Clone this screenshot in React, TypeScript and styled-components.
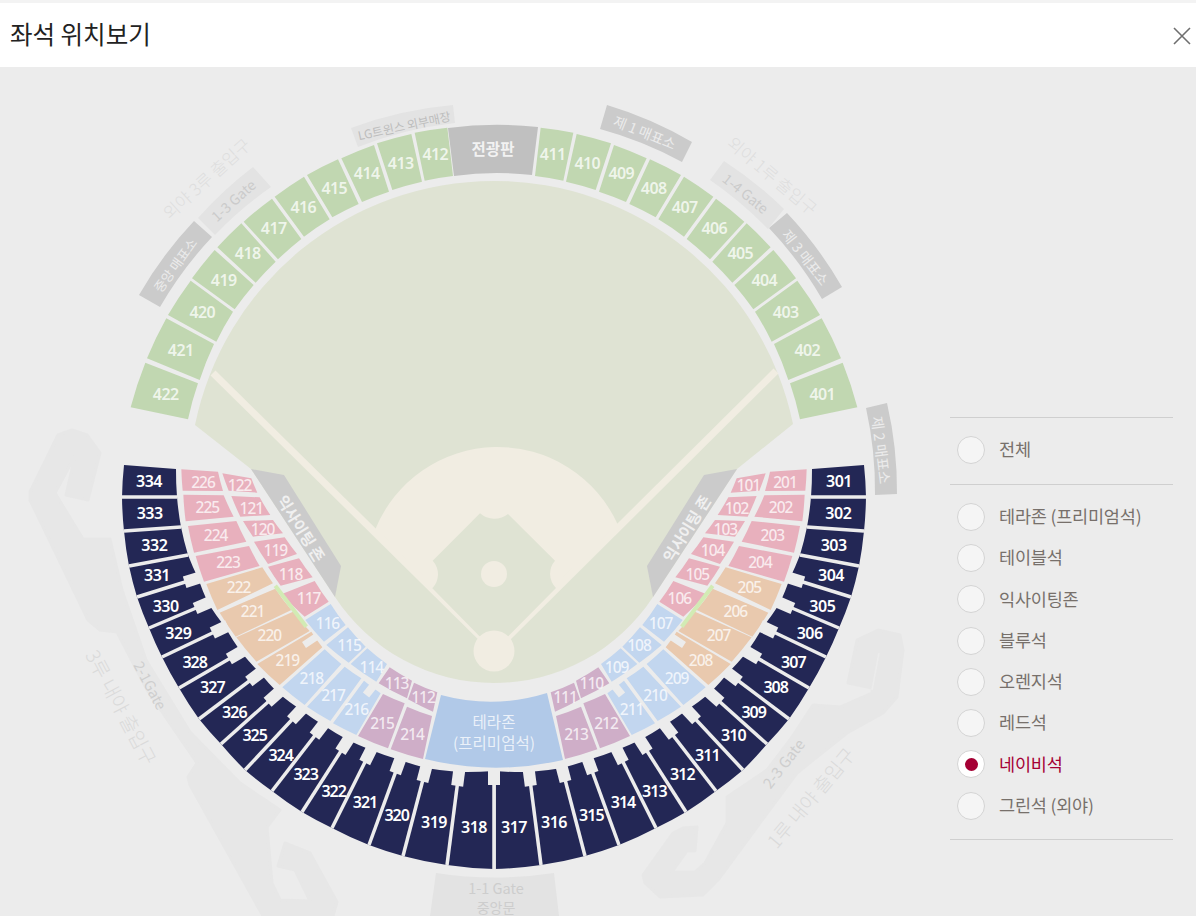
import React from 'react';
import styled, { createGlobalStyle } from 'styled-components';

type Pt = [number, number];
type Tone = 'navy' | 'pink' | 'orange' | 'blue' | 'mauve' | 'green';

const AXIS = 988;

const GlobalStyle = createGlobalStyle`
  html, body { margin: 0; padding: 0; background: #ececec; }
  * { box-sizing: border-box; }
`;

const Page = styled.div`
  width: 1196px;
  height: 916px;
  overflow: hidden;
  background: #ececec;
  font-family: 'Noto Sans CJK KR', 'Noto Sans', sans-serif;
`;
const TopStrip = styled.div`
  height: 3px;
  background: #f3f3f3;
`;
const Header = styled.header`
  height: 64px;
  background: #fff;
  display: flex;
  align-items: center;
  justify-content: space-between;
  padding: 0 5px 0 10px;
`;
const Title = styled.h1`
  margin: 0;
  font-size: 24.5px;
  line-height: 1;
  font-weight: 400;
  color: #222;
  position: relative;
  top: -1px;
`;
const CloseButton = styled.button`
  width: 18px;
  height: 18px;
  padding: 0;
  border: 0;
  background: none;
  display: flex;
  position: relative;
  top: 1px;
`;
const Body = styled.main`
  display: flex;
  height: 849px;
`;
const MapSvg = styled.svg`
  display: block;
  flex: none;
  width: 950px;
  height: 849px;
`;
const Legend = styled.aside`
  width: 223px;
  padding-top: 350px;
  flex: none;
`;
const LegendGroup = styled.div`
  border-top: 1px solid #cfcfcf;
  padding: 11.5px 0 13px;
  &:last-child {
    border-bottom: 1px solid #cfcfcf;
  }
`;
const LegendRow = styled.label`
  height: 41.25px;
  display: flex;
  align-items: center;
  gap: 14px;
  padding-left: 7px;
`;
const Radio = styled.span<{ $on?: boolean }>`
  width: 28px;
  height: 28px;
  border-radius: 50%;
  border: 1px solid #d4d4d4;
  background: ${(p) => (p.$on ? '#fff' : '#f5f5f5')};
  display: flex;
  align-items: center;
  justify-content: center;
  &::after {
    content: '';
    display: ${(p) => (p.$on ? 'block' : 'none')};
    width: 13px;
    height: 13px;
    border-radius: 50%;
    background: #a50034;
  }
`;
const LegendText = styled.span<{ $on?: boolean }>`
  font-size: 17.5px;
  line-height: 1;
  letter-spacing: -0.2px;
  padding-bottom: 2px;
  color: ${(p) => (p.$on ? '#a50034' : '#77706b')};
`;

const fills: Record<Tone, string> = {
  navy: '#232755',
  pink: '#e8b0bd',
  orange: '#e9c9ae',
  blue: '#c2d6ef',
  mauve: '#cfaec8',
  green: '#c1d7b1',
};

const Section = styled.path<{ $tone: Tone }>`
  fill: ${(p) => fills[p.$tone]};
`;
const Terrace = styled.path`
  fill: #b1c9e8;
`;
const Walkway = styled.path`
  fill: #e7e7e7;
  stroke: #e7e7e7;
  stroke-width: 3;
  stroke-linejoin: round;
`;
const Outfield = styled.path`
  fill: #dfe3d3;
`;
const Dirt = styled.path`
  fill: #f1ede2;
`;
const BaseSpot = styled.circle`
  fill: #f1ede2;
`;
const FoulLine = styled.line`
  stroke: #f1ede2;
  stroke-width: 7;
`;
const Divider = styled.line`
  stroke: #ececec;
  stroke-width: 3.5;
`;
const Notch = styled.line`
  stroke: #ececec;
  stroke-width: 12;
`;
const Slit = styled.line`
  stroke: #ececec;
  stroke-width: 1.5;
`;
const Seam = styled.line`
  stroke: #d2ebb4;
  stroke-width: 4;
`;
const Plate = styled.path<{ $kind: 'ticket' | 'gate' | 'board' }>`
  fill: ${(p) => (p.$kind === 'ticket' ? '#cbcbcb' : p.$kind === 'board' ? '#c0c0c0' : '#e3e3e3')};
`;
const SeatLabel = styled.text<{ $navy?: boolean; $size?: number; $tight?: number; $weight?: number }>`
  font-family: 'Noto Sans', 'Noto Sans CJK KR', sans-serif;
  font-size: ${(p) => p.$size ?? 15.5}px;
  font-weight: ${(p) => p.$weight ?? 500};
  letter-spacing: ${(p) => p.$tight ?? -1}px;
  fill: ${(p) => (p.$navy ? '#fff' : 'rgba(255,255,255,0.75)')};
  text-anchor: middle;
  dominant-baseline: central;
`;
const MapNote = styled.text<{ $size: number; $color: string; $weight?: number }>`
  font-family: 'Noto Sans CJK KR', 'Noto Sans', sans-serif;
  font-size: ${(p) => p.$size}px;
  font-weight: ${(p) => p.$weight ?? 400};
  fill: ${(p) => p.$color};
  text-anchor: middle;
  dominant-baseline: central;
`;

// Crop coordinates (3x) of the right lower bowl and of the right upper deck, read off the picture.
const bowl = (X: number, Y: number): Pt => [520 + X / 3, 440 + Y / 3];
const deck = (X: number, Y: number): Pt => [500 + X / 3, 90 + Y / 3];

const navyDividers: { outer: Pt; inner: Pt; notch?: boolean }[] = [
  { outer: [864, 465], inner: [812, 469] },
  { outer: [866, 497], inner: [811, 497] },
  { outer: [864, 531], inner: [807, 527] },
  { outer: [859, 566], inner: [800, 555] },
  { outer: [851, 597], inner: [790, 578], notch: true },
  { outer: [839, 628], inner: [780, 603], notch: true },
  { outer: [826, 657], inner: [763, 627], notch: true },
  { outer: [809, 688], inner: [747, 652], notch: true },
  { outer: [789, 719], inner: [728, 673], notch: true },
  { outer: [767, 744], inner: [710, 693], notch: true },
  { outer: [743, 770], inner: [687, 710], notch: true },
  { outer: [716, 791], inner: [665, 725], notch: true },
  { outer: [686, 812], inner: [640, 740], notch: true },
  { outer: [656, 828], inner: [617, 750], notch: true },
  { outer: [619, 845], inner: [588, 760], notch: true },
  { outer: [585, 856], inner: [562, 768], notch: true },
  { outer: [541, 865], inner: [529, 772], notch: true },
  { outer: [494, 869], inner: [494, 771], notch: true },
];

const ring = (tone: Tone, R: number, r: number, quad: number[][]) =>
  quad.map((q) => {
    // listed as inner-top, outer-top, outer-bottom, inner-bottom
    const [a, b, c, d] = [bowl(q[0], q[1]), bowl(q[2], q[3]), bowl(q[4], q[5]), bowl(q[6], q[7])];
    return { tone, d: arcQuad(b, c, d, a, R, r) };
  });

function arcQuad(oa: Pt, ob: Pt, ib: Pt, ia: Pt, R: number, r: number) {
  return `M${oa} A${R} ${R} 0 0 1 ${ob} L${ib} A${r} ${r} 0 0 0 ${ia} Z`;
}

const seats: { tone: Tone; d: string }[] = [
  ...navyDividers.slice(0, -1).map((v, i) => {
    const n = navyDividers[i + 1];
    return { tone: 'navy' as Tone, d: arcQuad(v.outer, n.outer, n.inner, v.inner, 371, 320) };
  }),
  ...ring('pink', 310, 250, [
    [750, 95, 860, 88, 856, 152, 735, 153],
    [733, 166, 854, 164, 847, 244, 703, 230],
    [695, 243, 840, 258, 822, 338, 665, 305],
    [657, 318, 817, 348, 792, 425, 625, 378],
  ]),
  ...ring('orange', 310, 250, [
    [617, 382, 785, 432, 752, 510, 585, 430],
    [578, 446, 745, 518, 697, 590, 530, 510],
    [525, 515, 695, 592, 635, 665, 475, 573],
    [470, 575, 632, 672, 565, 735, 437, 622],
  ]),
  ...ring('blue', 310, 250, [
    [430, 628, 557, 742, 490, 795, 380, 672],
    [370, 680, 483, 800, 413, 843, 320, 715],
    [312, 722, 405, 850, 335, 885, 262, 760],
  ]),
  ...ring('mauve', 310, 250, [
    [255, 762, 330, 888, 240, 925, 190, 790],
    [183, 800, 232, 928, 135, 957, 108, 828],
  ]),
  ...ring('pink', 250, 200, [
    [650, 115, 737, 100, 718, 152, 632, 158],
    [625, 172, 710, 168, 683, 230, 593, 225],
    [585, 240, 675, 243, 645, 290, 555, 280],
    [550, 292, 642, 305, 600, 372, 513, 342],
    [507, 355, 600, 380, 562, 437, 466, 412],
    [460, 423, 558, 462, 490, 530, 418, 485],
  ]),
  ...ring('blue', 250, 200, [
    [412, 492, 488, 540, 432, 605, 367, 555],
    [360, 562, 425, 615, 358, 668, 307, 620],
    [302, 625, 352, 672, 275, 725, 243, 672],
  ]),
  ...ring('mauve', 250, 200, [
    [235, 682, 268, 730, 183, 775, 168, 722],
    [162, 728, 180, 778, 105, 815, 92, 757],
  ]),
  ...[
    [122, 113, 220, 128, 190, 272, 105, 258],
    [230, 132, 333, 160, 287, 300, 198, 275],
    [342, 165, 440, 205, 378, 336, 297, 305],
    [450, 208, 543, 255, 467, 382, 388, 342],
    [552, 260, 640, 320, 552, 440, 475, 388],
    [648, 326, 733, 395, 630, 508, 560, 447],
    [740, 400, 812, 472, 697, 578, 637, 515],
    [820, 480, 888, 565, 760, 658, 703, 585],
    [892, 572, 960, 675, 815, 755, 765, 665],
    [965, 685, 1023, 805, 865, 870, 822, 762],
    [1028, 818, 1072, 952, 900, 988, 870, 880],
  ].map((q) => ({
    tone: 'green' as Tone,
    d: arcQuad(deck(q[0], q[1]), deck(q[2], q[3]), deck(q[4], q[5]), deck(q[6], q[7]), 375, 314),
  })),
];

const notchEnd = (v: { outer: Pt; inner: Pt }, from: number, to: number) => {
  const dx = v.outer[0] - v.inner[0];
  const dy = v.outer[1] - v.inner[1];
  const len = Math.hypot(dx, dy);
  const at = (t: number): Pt => [v.inner[0] + (dx / len) * t, v.inner[1] + (dy / len) * t];
  return { a: at(from), b: at(to) };
};

const navyLabels: [number, number, number][] = [
  [301, 957, 122], [302, 955, 220], [303, 941, 315], [304, 933, 405], [305, 907, 497], [306, 869, 580],
  [307, 820, 665], [308, 767, 742], [309, 701, 816], [310, 640, 886], [311, 562, 946], [312, 487, 1003],
  [313, 403, 1053], [314, 309, 1087], [315, 214, 1125], [316, 102, 1146], [317, -18, 1161],
];
const lowerLabels: [number, number, number][] = [
  [201, 795, 127], [202, 782, 202], [203, 757, 286], [204, 720, 366], [205, 688, 440], [206, 646, 514],
  [207, 596, 586], [208, 542, 660], [209, 470, 714], [210, 405, 765], [211, 335, 808], [212, 258, 849],
  [213, 168, 882], [101, 685, 134], [102, 650, 204], [103, 616, 266], [104, 578, 331], [105, 532, 401],
  [106, 478, 475], [107, 422, 549], [108, 357, 615], [109, 290, 680], [110, 214, 730], [111, 135, 772],
];
const deckLabels: [number, number, number][] = [
  [401, 967, 911], [402, 922, 781], [403, 857, 667], [404, 793, 569], [405, 721, 490], [406, 643, 415],
  [407, 554, 350], [408, 461, 295], [409, 364, 250], [410, 262, 218], [411, 158, 193],
];

// Mirrored number across the stadium axis.
const mirrorNavy = (n: number) => 635 - n;
const mirrorLower = (n: number) => (n >= 200 ? 427 - n : 223 - n);
const mirrorDeck = (n: number) => 823 - n;

const plates: { kind: 'ticket' | 'gate' | 'board'; d: string }[] = [
  { kind: 'board', d: 'M448,128 A375 375 0 0 1 538,127 L532,175 A314 314 0 0 0 454,176 Z' },
  { kind: 'ticket', d: 'M607,105 A390 390 0 0 1 692,142 L682,162 A380 380 0 0 0 600,129 Z' },
  { kind: 'ticket', d: 'M787,213 A390 390 0 0 1 842,287 L822,299 A380 380 0 0 0 769,228 Z' },
  { kind: 'ticket', d: 'M887,403 A390 390 0 0 1 897,494 L875,495 A380 380 0 0 0 866,408 Z' },
  { kind: 'ticket', d: 'M139,295 A390 390 0 0 1 194,221 L212,237 A380 380 0 0 0 160,307 Z' },
  { kind: 'gate', d: 'M724,161 A390 390 0 0 1 784,209 L768,229 A380 380 0 0 0 710,180 Z' },
  { kind: 'gate', d: 'M198,218 A390 390 0 0 1 253,167 L271,187 A380 380 0 0 0 215,235 Z' },
  { kind: 'gate', d: 'M351,128 A390 390 0 0 1 453,105 L455,123 A380 380 0 0 0 358,147 Z' },
  { kind: 'gate', d: 'M436,873 A385 385 0 0 0 554,873 L559,916 L430,916 Z' },
];

const notes: { t: string; x: number; y: number; r: number; s: number; c: string; w?: number }[] = [
  { t: '전광판', x: 493, y: 148, r: 0, s: 15.5, c: '#f2f2f2', w: 700 },
  { t: '제 1 매표소', x: 645, y: 132, r: 22, s: 14, c: '#ececec' },
  { t: '제 3 매표소', x: 806, y: 257, r: 52, s: 14, c: '#ececec' },
  { t: '제 2 매표소', x: 882, y: 450, r: 83, s: 14.5, c: '#ececec' },
  { t: '중앙 매표소', x: 175, y: 265, r: -54, s: 13, c: '#ececec' },
  { t: 'LG트윈스 외부매장', x: 404, y: 125, r: -12, s: 12, c: '#bdbdbd' },
  { t: '1-4 Gate', x: 746, y: 193, r: 39, s: 14, c: '#cbcbcb' },
  { t: '1-3 Gate', x: 233, y: 200, r: -42, s: 14, c: '#cbcbcb' },
  { t: '외야 1루 출입구', x: 773, y: 175, r: 40, s: 17, c: '#dedede', w: 300 },
  { t: '외야 3루 출입구', x: 206, y: 178, r: -42, s: 17, c: '#dedede', w: 300 },
  { t: '익사이팅 존', x: 686, y: 528, r: -58, s: 15.5, c: '#f0f0f0', w: 700 },
  { t: '익사이팅 존', x: 302, y: 528, r: 58, s: 15.5, c: '#f0f0f0', w: 700 },
  { t: '3루 내야 출입구', x: 122, y: 707, r: 62, s: 19.5, c: '#dadada', w: 300 },
  { t: '2-1Gate', x: 151, y: 685, r: 62, s: 14.5, c: '#cecece' },
  { t: '2-3 Gate', x: 783, y: 763, r: -52, s: 15, c: '#cecece' },
  { t: '1루 내야 출입구', x: 810, y: 797, r: -50, s: 19, c: '#dadada', w: 300 },
  { t: '1-1 Gate', x: 496, y: 887, r: 0, s: 14.5, c: '#cdcdcd' },
  { t: '중앙문', x: 496, y: 907, r: 0, s: 14, c: '#cdcdcd' },
];

const legendAll = ['전체'];
const legendZones = ['테라존 (프리미엄석)', '테이블석', '익사이팅존', '블루석', '오렌지석', '레드석', '네이비석', '그린석 (외야)'];

const Shapes = () => (
  <>
    {seats.map((s, i) => (
      <Section key={i} $tone={s.tone} d={s.d} />
    ))}
    {navyDividers.slice(1).map((v, i) => (
      <Divider key={i} x1={v.inner[0]} y1={v.inner[1]} x2={v.outer[0]} y2={v.outer[1]} />
    ))}
    {navyDividers
      .filter((v) => v.notch)
      .map((v, i) => {
        const { a, b } = notchEnd(v, -3, 14);
        return <Notch key={i} x1={a[0]} y1={a[1]} x2={b[0]} y2={b[1]} />;
      })}
    <Notch x1={672} y1={637} x2={684} y2={645} style={{ strokeWidth: 7 }} />
    <Notch x1={614} y1={685} x2={622} y2={695} style={{ strokeWidth: 8 }} />
    <Seam x1={712.7} y1={585.7} x2={681.7} y2={626.7} />
    <Plate $kind="ticket" d="M704,475 L737,469 L653,597 L647,566 Z" />
  </>
);

export default function App() {
  return (
    <>
      <GlobalStyle />
      <Page>
        <TopStrip />
        <Header>
          <Title>좌석 위치보기</Title>
          <CloseButton aria-label="닫기">
            <svg width="18" height="18" viewBox="0 0 18 18">
              <path d="M1 1 L17 17 M17 1 L1 17" stroke="#6f6f6f" strokeWidth="1.6" fill="none" />
            </svg>
          </CloseButton>
        </Header>
        <Body>
          <MapSvg viewBox="0 67 950 849">
            <Walkway d="M58,435 L72,430 L87,435 L100,453 L88,500 L66,495 L75,456 L55,493 L83,539 L110,539 L122,590 L146,660 L190,732 L240,783 L280,810 L267,827 L272,883 L280,900 L310,901 L295,870 L278,866 L285,843 L310,853 L337,902 L333,916 L263,916 L190,785 L188,777 L197,763 L147,690 L117,632 L100,630 L88,620 L30,500 L30,492 Z" />
            <Walkway d="M857,640 L878,630 L900,635 L903,650 L897,697 L883,713 L847,733 L797,773 L757,827 L718,880 L703,895 L660,897 L645,883 L643,875 L673,833 L683,828 L697,827 L695,851 L687,851 L672,872 L695,872 L705,863 L727,823 L727,797 L767,770 L790,740 L813,705 L840,707 L872,693 L872,688 L848,683 Z" />
            <Slit x1={879} y1={653} x2={872} y2={690} />
            <Outfield d="M195,425 A305.3 305.3 0 0 1 793,424 L737,469 L653,597 A190 190 0 0 1 335,597 L251,469 Z" />
            <Dirt d="M375,530 A132 132 0 0 1 618,525 L494,651 Z" />
            <FoulLine x1={213} y1={373} x2={495} y2={651} />
            <FoulLine x1={776} y1={371} x2={494} y2={651} />
            <Outfield d="M480,513.3 A22 22 0 0 0 508,514 L555,560.7 A20 20 0 0 0 556,588 L507.7,636.7 L480,636.7 L432.3,588.3 A20 20 0 0 0 432.7,560.7 Z" />
            <BaseSpot cx={494} cy={651} r={20.5} />
            <BaseSpot cx={494} cy={574} r={13} />
            <Terrace d="M441,695 A190 190 0 0 0 547,693 L563,760 A300 300 0 0 1 425,759 Z" />
            {plates.map((p, i) => (
              <Plate key={i} $kind={p.kind} d={p.d} />
            ))}
            <g>
              <Shapes />
            </g>
            <g transform={`translate(${AXIS} 0) scale(-1 1)`}>
              <Shapes />
            </g>
            {navyLabels.map(([n, X, Y]) => {
              const [x, y] = bowl(X, Y);
              const tight = n >= 307 && n <= 315 ? -1 : -0.5;
              return (
                <React.Fragment key={n}>
                  <SeatLabel $navy $size={16} $weight={600} $tight={tight} x={x} y={y}>{n}</SeatLabel>
                  <SeatLabel $navy $size={16} $weight={600} $tight={tight} x={AXIS - x} y={y}>{mirrorNavy(n)}</SeatLabel>
                </React.Fragment>
              );
            })}
            {lowerLabels.map(([n, X, Y]) => {
              const [x, y] = bowl(X, Y);
              return (
                <React.Fragment key={n}>
                  <SeatLabel x={x} y={y}>{n}</SeatLabel>
                  <SeatLabel x={AXIS - x} y={y}>{mirrorLower(n)}</SeatLabel>
                </React.Fragment>
              );
            })}
            {deckLabels.map(([n, X, Y]) => {
              const [x, y] = deck(X, Y);
              return (
                <React.Fragment key={n}>
                  <SeatLabel $size={16} $weight={600} $tight={-0.6} x={x} y={y}>{n}</SeatLabel>
                  <SeatLabel $size={16} $weight={600} $tight={-0.6} x={AXIS - x} y={y}>{mirrorDeck(n)}</SeatLabel>
                </React.Fragment>
              );
            })}
            <MapNote $size={15.5} $color="rgba(255,255,255,0.75)" x={494} y={721}>테라존</MapNote>
            <MapNote $size={15.5} $color="rgba(255,255,255,0.75)" x={494} y={742}>(프리미엄석)</MapNote>
            {notes.map((n) => (
              <MapNote
                key={n.t + n.x}
                $size={n.s}
                $color={n.c}
                $weight={n.w}
                x={n.x}
                y={n.y}
                transform={n.r ? `rotate(${n.r} ${n.x} ${n.y})` : undefined}
              >
                {n.t}
              </MapNote>
            ))}
          </MapSvg>
          <Legend>
            <LegendGroup>
              {legendAll.map((t) => (
                <LegendRow key={t}>
                  <Radio />
                  <LegendText>{t}</LegendText>
                </LegendRow>
              ))}
            </LegendGroup>
            <LegendGroup>
              {legendZones.map((t) => (
                <LegendRow key={t}>
                  <Radio $on={t === '네이비석'} />
                  <LegendText $on={t === '네이비석'}>{t}</LegendText>
                </LegendRow>
              ))}
            </LegendGroup>
          </Legend>
        </Body>
      </Page>
    </>
  );
}
